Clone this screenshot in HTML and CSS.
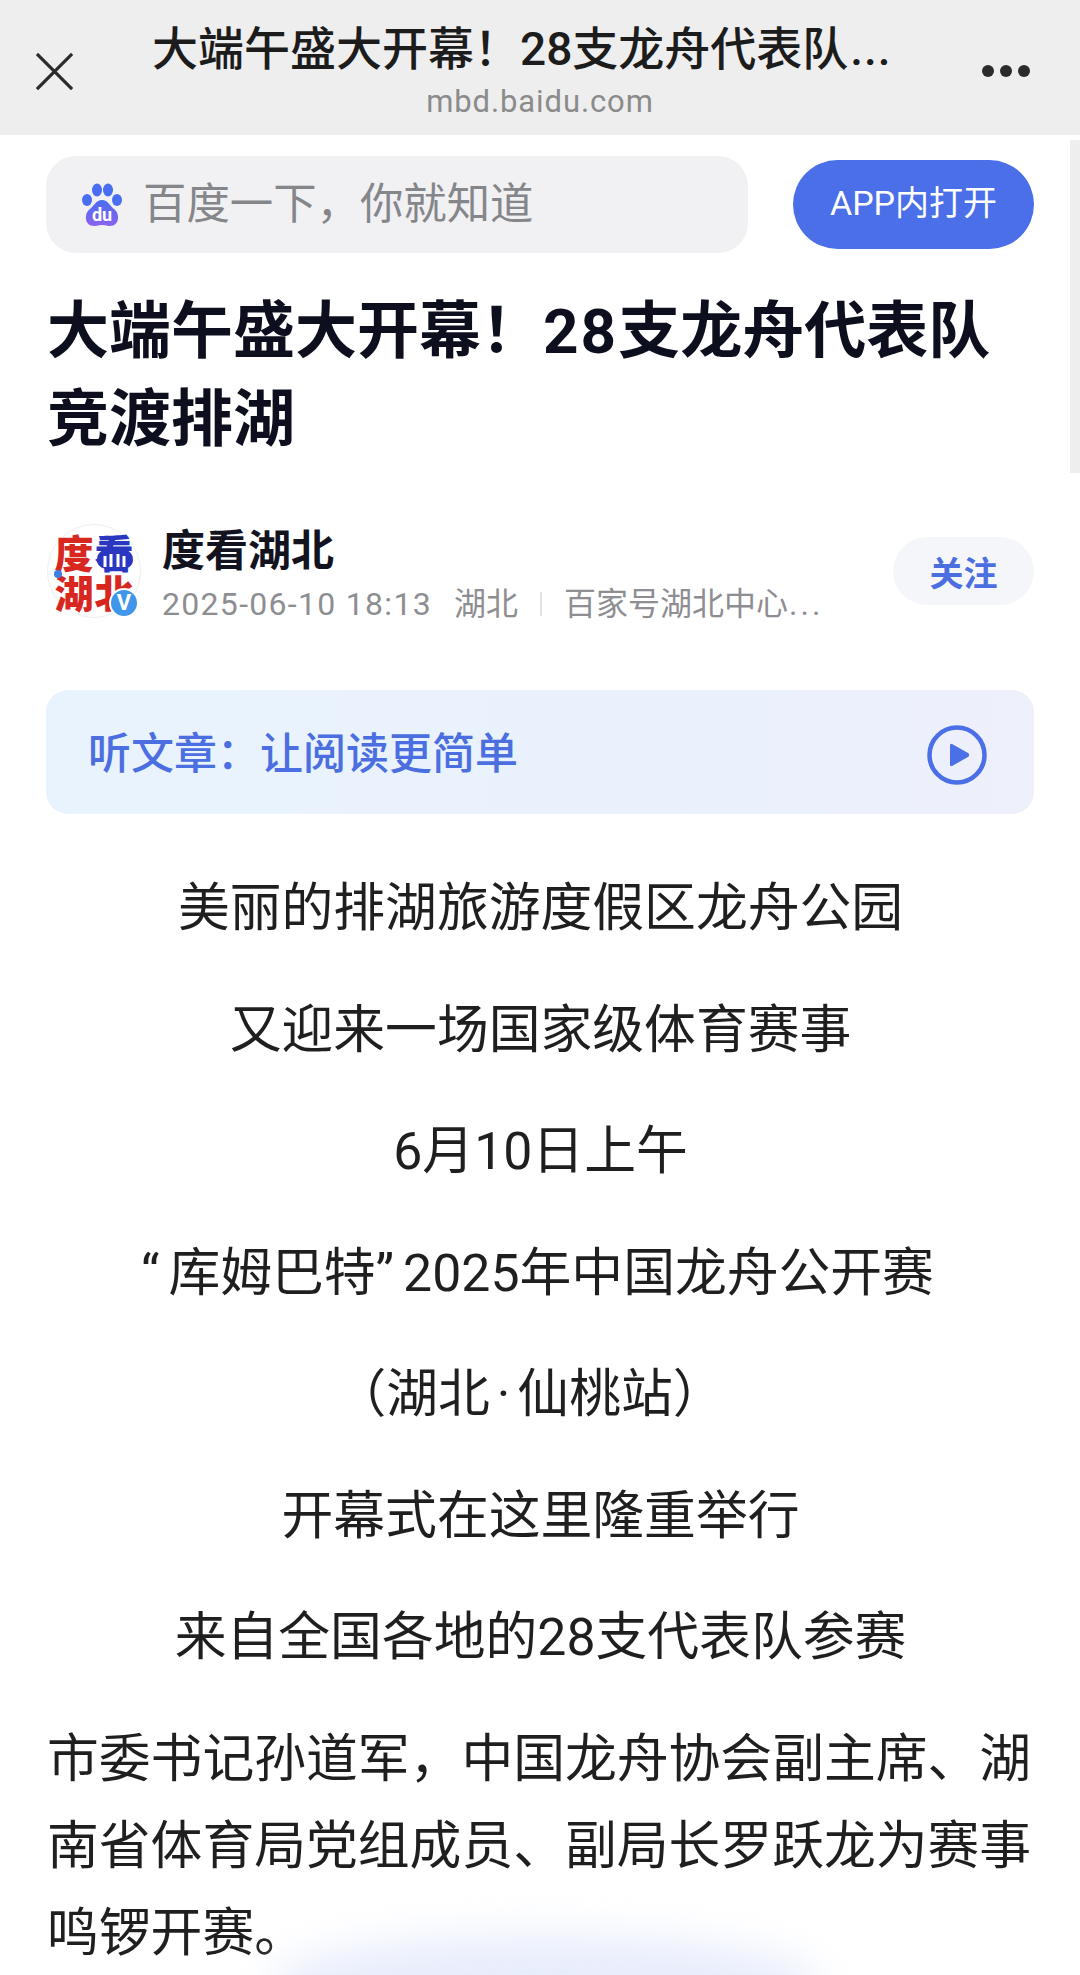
FILE: index.html
```html
<!DOCTYPE html>
<html lang="zh-CN">
<head>
<meta charset="utf-8">
<title>大端午盛大开幕</title>
<link rel="stylesheet" href="styles.css">
</head>
<body>
<div class="page">
  <header class="topbar">
    <svg class="close" viewBox="0 0 40 40"><path d="M1 1 L38 38 M38 1 L1 38" fill="none" stroke="#2b2b2b" stroke-width="3.4"/></svg>
    <div class="topbar-mid">
      <div class="topbar-title">大端午盛大开幕&#xFF01;28支龙舟代表队<span class="dots">...</span></div>
      <div class="topbar-url">mbd.baidu.com</div>
    </div>
    <div class="more"><i></i><i></i><i></i></div>
  </header>
  <div class="scrollbar"></div>
  <div class="searchrow">
    <div class="search">
      <svg class="paw" viewBox="0 0 42 44">
        <defs><linearGradient id="pg" x1="0" y1="0" x2="0" y2="1"><stop offset="0" stop-color="#4a6ef0"/><stop offset="1" stop-color="#8a62ee"/></linearGradient></defs>
        <ellipse cx="6" cy="17" rx="5" ry="6" fill="#4a6ef0"/>
        <ellipse cx="16" cy="7" rx="5" ry="6.5" fill="#4a6ef0"/>
        <ellipse cx="27" cy="7" rx="5" ry="6.5" fill="#4a6ef0"/>
        <ellipse cx="36" cy="17" rx="5" ry="6" fill="#4a6ef0"/>
        <path d="M21 17 C27 17 29 23 33 26 C39 30 39 43 29 43 C25 43 24 42 21 42 C18 42 17 43 13 43 C3 43 3 30 9 26 C13 23 15 17 21 17Z" fill="url(#pg)"/>
        <text x="21" y="38" class="paw-du">du</text>
      </svg>
      <span class="search-text">百度一下&#xFF0C;你就知道</span>
    </div>
    <div class="app-btn">APP内打开</div>
  </div>
  <h1 class="headline">大端午盛大开幕&#xFF01;<span class="digits">28</span>支龙舟代表队竞渡排湖</h1>
  <div class="author">
    <div class="avatar">
      <span class="logo-red">度</span><span class="logo-blue">看</span><span class="logo-red">湖</span><span class="logo-red">北</span>
      <svg class="avatar-art" viewBox="0 0 94 94">
        <path d="M50 36 Q50 24 68 24 Q86 24 86 36 Q86 46 68 46 Q50 46 50 36Z" fill="#2a37c0"/>
        <path d="M58 32 V43 M64 30 V43 M71 30 V43 M77 32 V43" stroke="#fff" stroke-width="3" fill="none"/>
        <circle cx="11" cy="50" r="4" fill="#3f7fe0"/>
      </svg>
      <div class="vbadge">V</div>
    </div>
    <div class="author-info">
      <div class="author-name">度看湖北</div>
      <div class="author-meta"><span class="meta-date">2025-06-10 18:13</span><span class="meta-gap">湖北</span><span class="sep"></span><span>百家号湖北中心<span class="meta-dots">...</span></span></div>
    </div>
    <div class="follow">关注</div>
  </div>
  <div class="listen">
    <span>听文章&#xFF1A;让阅读更简单</span>
    <svg class="play" viewBox="0 0 60 60"><circle cx="30" cy="30" r="27.5" fill="none" stroke="#4b6fe6" stroke-width="4.5"/><path d="M23 20.5 Q23 18 25.5 19.3 L41 28 Q43.5 30 41 32 L25.5 40.7 Q23 42 23 39.5Z" fill="#4b6fe6"/></svg>
  </div>
  <article class="article">
    <p class="c">美丽的排湖旅游度假区龙舟公园</p>
    <p class="c">又迎来一场国家级体育赛事</p>
    <p class="c">6月10日上午</p>
    <p class="c quoted"><span class="q">“</span>库姆巴特<span class="q">”</span>2025年中国龙舟公开赛</p>
    <p class="c paren">&#xFF08;湖北<span class="middot">·</span>仙桃站&#xFF09;</p>
    <p class="c">开幕式在这里隆重举行</p>
    <p class="c">来自全国各地的28支代表队参赛</p>
    <p class="body">市委书记孙道军&#xFF0C;中国龙舟协会副主席、湖南省体育局党组成员、副局长罗跃龙为赛事鸣锣开赛。</p>
  </article>
  <div class="glow"></div>
</div>
</body>
</html>
```
FILE: styles.css
```css
* { box-sizing: border-box; }
html, body { margin: 0; padding: 0; background: #fff; }
body { font-family: "Liberation Sans", "Noto Sans CJK SC", sans-serif; }
.page { position: relative; width: 1080px; height: 1975px; overflow: hidden; font-family: "Noto Sans", "Noto Sans CJK SC", sans-serif; color: #1f1f1f; }

.topbar { height: 135px; background: #eeeeef; display: grid; grid-template-columns: 116px 1fr 116px; align-items: start; }
.close { width: 38px; height: 38px; margin: 53px 0 0 36px; }
.topbar-mid { min-width: 0; text-align: center; padding-top: 20px; }
.topbar-title { margin-left: 36px; text-align: left; font-size: 46px; line-height: 58px; color: #1c1c1c; font-family: "Roboto", "Noto Sans CJK SC", sans-serif; font-weight: 500; white-space: nowrap; }
.dots { letter-spacing: 1px; margin-left: 2px; }
.topbar-url { font-size: 31px; letter-spacing: 0.9px; line-height: 36px; color: #8b8b8b; margin-top: 6px; font-family: "Roboto", sans-serif; }
.more { display: flex; gap: 6px; margin: 65px 50px 0 0; justify-content: flex-end; }
.more i { width: 12px; height: 12px; border-radius: 50%; background: #2b2b2b; flex: none; }

.scrollbar { position: absolute; right: 0; top: 140px; width: 10px; height: 333px; background: #eeeeef; }

.searchrow { display: flex; align-items: center; justify-content: space-between; padding: 21px 46px 0 46px; }
.search { width: 702px; height: 97px; background: #f1f1f4; border-radius: 30px; display: flex; align-items: center; padding-left: 35px; }
.paw { width: 42px; height: 44px; flex: none; }
.paw-du { font: 700 18px "Roboto", sans-serif; fill: #fff; text-anchor: middle; }
.search-text { font-size: 43.4px; color: #85868a; margin-left: 20px; line-height: 60px; margin-top: -4px; }
.app-btn { width: 241px; height: 89px; border-radius: 45px; background: #4a6fe8; color: #fff; font-size: 34px; line-height: 86px; display: flex; align-items: flex-start; justify-content: center; font-family: "Roboto", "Noto Sans CJK SC", sans-serif; }

.headline { margin: 35px 46px 0 47px; font-size: 62px; line-height: 88px; font-weight: 700; color: #0d0f1e; font-family: "Roboto", "Noto Sans CJK SC", sans-serif; }
.digits { letter-spacing: 2px; }

.author { display: flex; align-items: flex-start; margin-top: 60px; padding: 0 46px 0 47px; }
.avatar { position: relative; width: 94px; height: 94px; flex: none; border-radius: 50%; border: 1px solid #eeeeee; display: grid; grid-template-columns: 40px 40px; grid-auto-rows: 40px; justify-content: center; align-content: center; }
.avatar-art { position: absolute; left: -1px; top: -1px; width: 94px; height: 94px; }
.logo-red, .logo-blue { font-family: "Noto Sans CJK SC", sans-serif; font-weight: 900; font-size: 39px; line-height: 40px; text-align: center; }
.logo-red { color: #d8271f; }
.logo-blue { color: #2a37c0; }
.vbadge { position: absolute; right: 1px; bottom: -1px; width: 30px; height: 30px; border-radius: 50%; background: #3f96ea; border: 2px solid #fff; color: #fff; font: 700 22px/26px "Roboto", sans-serif; text-align: center; }
.author-info { flex: 1; min-width: 0; margin-left: 21px; }
.author-name { font-size: 43px; line-height: 52px; font-weight: 700; color: #12131f; }
.author-meta { font-size: 32px; line-height: 42px; color: #8e8e92; margin-top: 7px; display: flex; align-items: center; white-space: nowrap; font-family: "Roboto", "Noto Sans CJK SC", sans-serif; }
.meta-date { letter-spacing: 1.3px; }
.meta-gap { margin-left: 22px; }
.meta-dots { letter-spacing: 3px; margin-left: 1px; }
.sep { width: 2px; height: 24px; background: #e2e2e4; margin: 0 22px; }
.follow { width: 141px; height: 68px; margin-top: 13px; border-radius: 34px; background: #f5f6fa; color: #4b6fe0; font-size: 34px; font-weight: 700; display: flex; align-items: center; justify-content: center; flex: none; }

.listen { margin: 65px 46px 0 46px; height: 124px; border-radius: 22px; background: linear-gradient(90deg, #e9f3fd 0%, #e9f1fd 60%, #eef0fb 100%); display: flex; align-items: center; justify-content: space-between; padding: 0 47px 0 42px; color: #4b6fe0; font-size: 43px; font-weight: 500; }
.listen span { margin-top: -4px; }
.play { width: 60px; height: 60px; flex: none; margin-top: 5px; }

.article { padding: 0 46px 0 47px; margin-top: 51px; font-size: 51.8px; color: #1f1f1f; font-family: "Roboto", "Noto Sans CJK SC", sans-serif; }
.article p { margin: 0; }
.q { letter-spacing: 9px; }
.quoted { padding-right: 6px; }
.paren { padding-right: 22px; }
.middot { padding: 0 7px; }
.c { text-align: center; line-height: 87px; margin-bottom: 34.5px !important; }
.body { line-height: 87px; margin-top: 0; }

.glow { position: absolute; left: 270px; right: 260px; bottom: -60px; height: 100px; border-radius: 50%; background: #e8edfc; filter: blur(20px); }
```
